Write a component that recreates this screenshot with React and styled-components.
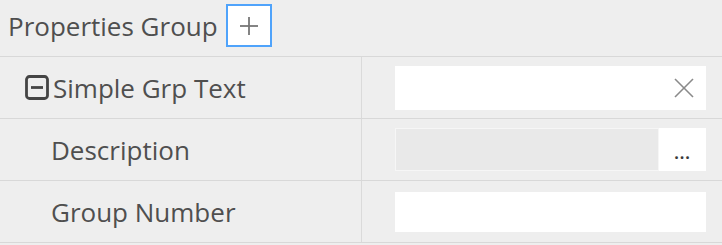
import styled, { createGlobalStyle } from "styled-components";

const GlobalStyle = createGlobalStyle`
  body {
    margin: 0;
    background: #eeeeee;
    font-family: "Open Sans", "Noto Sans", sans-serif;
  }
`;

const Panel = styled.div`
  width: 722px;
  background: #eeeeee;
  color: #4f4f4f;
`;

const Header = styled.div`
  display: flex;
  align-items: center;
  gap: 8px;
  height: 56px;
  padding-left: 8px;
  border-bottom: 1px solid #d8d8d8;
  font-size: 26px;
  line-height: 1;
`;

const Title = styled.span`
  margin-top: -4px;
`;

const AddButton = styled.button`
  display: flex;
  align-items: center;
  justify-content: center;
  width: 46px;
  height: 43px;
  margin-top: -5px;
  padding: 0;
  background: #ffffff;
  border: 2px solid #4fa3fb;
  cursor: pointer;
`;

const Row = styled.div`
  display: grid;
  grid-template-columns: 362px 1fr;
  height: 61px;
  border-bottom: 1px solid #d8d8d8;
`;

const LabelCell = styled.div`
  display: flex;
  align-items: center;
  gap: 4px;
  padding-left: ${(p) => p.$indent}px;
  border-right: 1px solid #dadada;
  font-size: 26px;
`;

const ValueCell = styled.div`
  display: flex;
  align-items: center;
  padding: 0 16px 0 33px;
`;

const Field = styled.div`
  display: flex;
  align-items: center;
  justify-content: flex-end;
  flex: 1;
  height: ${(p) => p.$height || 42}px;
  background: #ffffff;
`;

const ClearIcon = styled.svg`
  width: 20px;
  height: 20px;
  margin-right: 12px;
`;

const ReadOnlyPart = styled.div`
  flex: 1;
  align-self: stretch;
  background: #e9e9e9;
  border: 1px solid #f6f6f6;
`;

const EllipsisButton = styled.div`
  width: 47px;
  align-self: stretch;
  display: flex;
  align-items: flex-end;
  justify-content: center;
  padding-bottom: 10px;
  box-sizing: border-box;
  font-size: 16px;
  font-weight: 700;
  letter-spacing: 1px;
  color: #3a3a3a;
  line-height: 1;
`;

function MinusSquare() {
  return (
    <svg width="24" height="25" viewBox="0 0 24 25">
      <rect x="1.5" y="1.5" width="21" height="22" rx="3" fill="none" stroke="#444" strokeWidth="2.8" />
      <line x1="6" y1="12.5" x2="18" y2="12.5" stroke="#444" strokeWidth="2.8" />
    </svg>
  );
}

function Plus() {
  return (
    <svg width="20" height="20" viewBox="0 0 20 20">
      <line x1="10" y1="1" x2="10" y2="19" stroke="#777" strokeWidth="1.8" />
      <line x1="1" y1="10" x2="19" y2="10" stroke="#777" strokeWidth="1.8" />
    </svg>
  );
}

export default function App() {
  return (
    <>
      <GlobalStyle />
      <Panel>
        <Header>
          <Title>Properties Group</Title>
          <AddButton type="button">
            <Plus />
          </AddButton>
        </Header>
        <Row>
          <LabelCell $indent={25}>
            <MinusSquare />
            <span>Simple Grp Text</span>
          </LabelCell>
          <ValueCell>
            <Field $height={44}>
              <ClearIcon viewBox="0 0 20 20">
                <line x1="1" y1="1" x2="19" y2="19" stroke="#8a8a8a" strokeWidth="1.6" />
                <line x1="19" y1="1" x2="1" y2="19" stroke="#8a8a8a" strokeWidth="1.6" />
              </ClearIcon>
            </Field>
          </ValueCell>
        </Row>
        <Row>
          <LabelCell $indent={51}>Description</LabelCell>
          <ValueCell>
            <Field $height={43}>
              <ReadOnlyPart />
              <EllipsisButton>...</EllipsisButton>
            </Field>
          </ValueCell>
        </Row>
        <Row>
          <LabelCell $indent={51}>Group Number</LabelCell>
          <ValueCell>
            <Field $height={40} />
          </ValueCell>
        </Row>
      </Panel>
    </>
  );
}
